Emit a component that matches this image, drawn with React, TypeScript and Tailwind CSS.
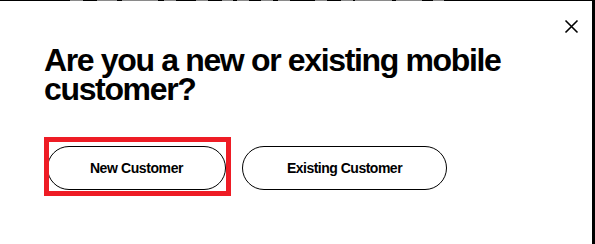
import React from "react";

const segs: [number, string][] = [
  [70, "#000"], [13, "#8a8a8a"], [14, "#000"], [20, "#8a8a8a"], [5, "#000"], [36, "#8a8a8a"], [6, "#000"], [12, "#8a8a8a"],
  [20, "#000"], [12, "#8a8a8a"], [14, "#000"], [11, "#8a8a8a"], [4, "#000"], [12, "#8a8a8a"], [12, "#000"], [12, "#8a8a8a"],
  [5, "#000"], [12, "#8a8a8a"], [25, "#000"], [12, "#8a8a8a"], [14, "#000"], [12, "#8a8a8a"], [2, "#000"], [37, "#8a8a8a"],
  [4, "#000"], [26, "#8a8a8a"], [11, "#000"], [11, "#8a8a8a"],
];

export default function App() {
  return (
    <div className="w-[595px] h-[244px] bg-white flex flex-col overflow-hidden" style={{ fontFamily: '"Liberation Sans", Arial, sans-serif' }}>
      <div className="flex h-[1px] w-full shrink-0">
        {segs.map(([w, c], i) => (
          <div key={i} className="h-[1px] shrink-0" style={{ width: w, background: c }} />
        ))}
        <div className="h-[1px] flex-1 bg-black" />
      </div>
      <div className="flex flex-1 border-r-[3px] border-black">
        <div className="flex-1 flex flex-col pl-[44px] pt-[45px]">
          <h1 className="text-[32px] leading-[29px] font-bold tracking-[-1.35px] text-black">
            Are you a new or existing mobile
            <br />
            customer?
          </h1>
          <div className="flex items-start mt-[33px] gap-[11px]">
            <div className="relative w-[187px] h-[59px] flex items-center shrink-0">
              <button className="absolute left-[3px] top-[9px] w-[179px] h-[44px] rounded-full border border-black bg-white text-[14px] font-bold text-black tracking-[-0.4px]">
                New Customer
              </button>
              <div className="absolute inset-0 border-[5px] border-[#ee1c25] pointer-events-none" />
            </div>
            <button className="w-[205px] h-[44px] mt-[9px] rounded-full border border-black bg-white text-[14px] font-bold text-black tracking-[-0.5px] shrink-0">
              Existing Customer
            </button>
          </div>
        </div>
        <div className="w-[34px] pt-[18px] pl-[6px] flex justify-start">
          <svg width="15" height="15" viewBox="0 0 15 15">
            <path d="M1.5 1.5 L13.5 13.5 M13.5 1.5 L1.5 13.5" stroke="#000" strokeWidth="1.6" />
          </svg>
        </div>
      </div>
    </div>
  );
}
